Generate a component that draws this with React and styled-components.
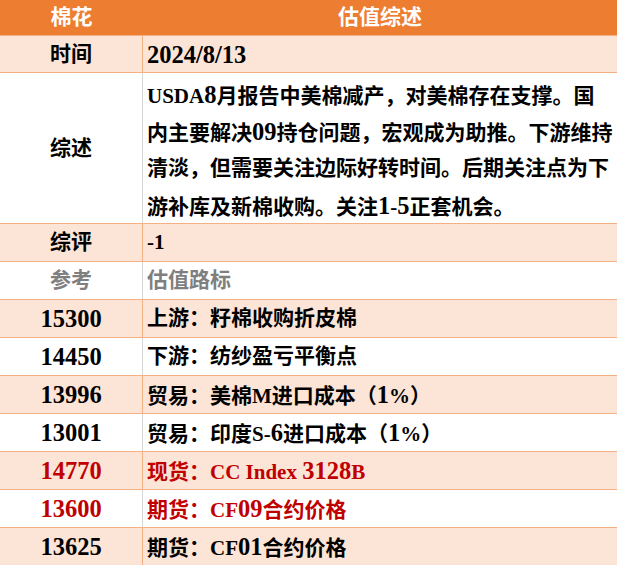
import React from 'react'
import styled, { createGlobalStyle } from 'styled-components'

const Global = createGlobalStyle`
  html, body {
    margin: 0;
    padding: 0;
    background: #ffffff;
  }
  body {
    font-family: "Liberation Serif", "Noto Sans CJK SC", serif;
  }
`

const Sheet = styled.div`
  width: 617px;
  display: flex;
  flex-direction: column;
`

const HeaderRow = styled.div`
  display: grid;
  grid-template-columns: 143px 1fr;
  height: 35px;
  background: #ed7d31;
  color: #ffffff;
  font-size: 21px;
  font-weight: 700;
  line-height: 35px;
  text-align: center;
`

const Row = styled.div`
  display: grid;
  grid-template-columns: 143px 1fr;
  border-top: 1px solid #f4b084;
  background: ${p => (p.$peach ? '#fce4d6' : '#ffffff')};
  color: ${p => p.$color || '#000000'};
  font-size: 21px;
  font-weight: 700;
  line-height: 37px;
`

const Label = styled.div`
  display: flex;
  align-items: center;
  justify-content: center;
  border-right: 1px solid ${p => (p.$peach ? '#f4b084' : '#d4d4d4')};
  height: ${p => p.$h || 37}px;
`

const Value = styled.div`
  display: flex;
  flex-direction: column;
  justify-content: center;
  padding-left: 4px;
  padding-top: ${p => p.$pt || 0}px;
  box-sizing: border-box;
  white-space: nowrap;
  height: ${p => p.$h || 37}px;
`

const Line = styled.div`
  height: 37px;
`

// digits in the sheet font run wider than Times
const Num = styled.span`
  font-size: 24.5px;
`

const withNums = text =>
  text.split(/([0-9][0-9/]*)/).map((part, i) =>
    /^[0-9]/.test(part) ? <Num key={i}>{part}</Num> : part
  )

const summary = [
  'USDA8月报告中美棉减产，对美棉存在支撑。国',
  '内主要解决09持仓问题，宏观成为助推。下游维持',
  '清淡，但需要关注边际好转时间。后期关注点为下',
  '游补库及新棉收购。关注1-5正套机会。',
]

const refs = [
  { n: '15300', t: '上游：籽棉收购折皮棉' },
  { n: '14450', t: '下游：纺纱盈亏平衡点' },
  { n: '13996', t: '贸易：美棉M进口成本（1%）' },
  { n: '13001', t: '贸易：印度S-6进口成本（1%）' },
  { n: '14770', t: '现货：CC Index 3128B', red: true },
  { n: '13600', t: '期货：CF09合约价格', red: true },
  { n: '13625', t: '期货：CF01合约价格' },
]

const App = () => {
  return (
    <Sheet>
      <Global />
      <HeaderRow>
        <div>棉花</div>
        <div>估值综述</div>
      </HeaderRow>

      <Row $peach>
        <Label $peach $h={36}>时间</Label>
        <Value $h={36}><Line>{withNums('2024/8/13')}</Line></Value>
      </Row>

      <Row>
        <Label $h={150}>综述</Label>
        <Value $h={150} $pt={4}>
          {summary.map(line => (
            <Line key={line}>{withNums(line)}</Line>
          ))}
        </Value>
      </Row>

      <Row $peach>
        <Label $peach>综评</Label>
        <Value><Line>-1</Line></Value>
      </Row>

      <Row $color="#7f7f7f">
        <Label>参考</Label>
        <Value><Line>估值路标</Line></Value>
      </Row>

      {refs.map((r, i) => (
        <Row key={r.n} $peach={i % 2 === 0} $color={r.red ? '#c00000' : undefined}>
          <Label $peach={i % 2 === 0}><Line>{withNums(r.n)}</Line></Label>
          <Value><Line>{withNums(r.t)}</Line></Value>
        </Row>
      ))}
    </Sheet>
  )
}

export default App
